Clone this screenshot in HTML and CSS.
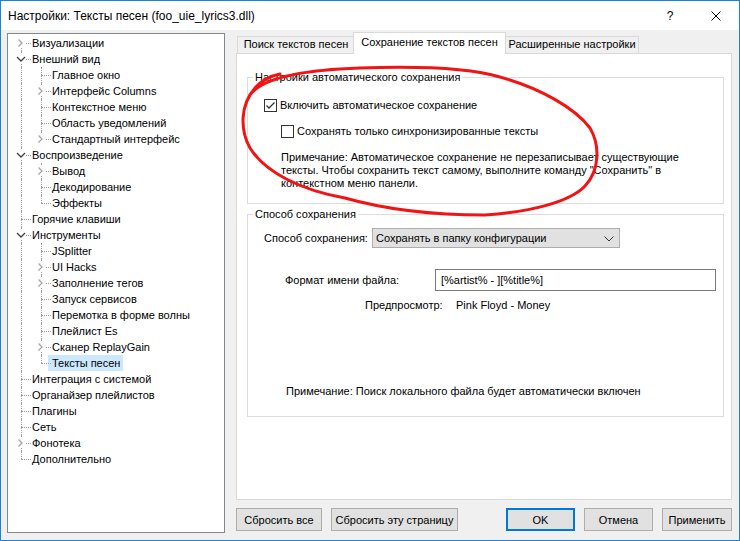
FILE: index.html
```html
<!DOCTYPE html>
<html lang="ru">
<head>
    <meta charset="UTF-8">
    <title>Настройки: Тексты песен</title>
    <link rel="stylesheet" href="styles.css">
</head>
<body>
    <svg class="defs" aria-hidden="true">
        <symbol id="shut" viewBox="0 0 10 10"><path d="M2.5 1.5L6 5L2.5 8.5" fill="none" stroke="#a6a6a6" stroke-width="1.3"/></symbol>
        <symbol id="open" viewBox="0 0 10 10"><path d="M1 3L5 7L9 3" fill="none" stroke="#404040" stroke-width="1.3"/></symbol>
    </svg>

    <div class="window">
        <!-- Title bar -->
        <div class="titlebar">
            <span class="title">Настройки: Тексты песен (foo_uie_lyrics3.dll)</span>
            <span class="cap-btn">?</span>
            <span class="cap-btn">
                <svg width="10" height="10" viewBox="0 0 10 10"><path d="M0.5 0.5L9.5 9.5M9.5 0.5L0.5 9.5" stroke="#000" stroke-width="1"/></svg>
            </span>
        </div>

        <div class="client">
            <!-- Preferences tree -->
            <div class="tree">
                <div class="row"><span class="ln first"><svg class="exp"><use href="#shut"/></svg></span><span class="txt">Визуализации</span></div>
                <div class="row"><span class="ln tee"><svg class="exp"><use href="#open"/></svg></span><span class="txt">Внешний вид</span></div>
                <div class="row"><span class="ln pipe"></span><span class="ln tee"></span><span class="txt">Главное окно</span></div>
                <div class="row"><span class="ln pipe"></span><span class="ln tee"><svg class="exp"><use href="#shut"/></svg></span><span class="txt">Интерфейс Columns</span></div>
                <div class="row"><span class="ln pipe"></span><span class="ln tee"></span><span class="txt">Контекстное меню</span></div>
                <div class="row"><span class="ln pipe"></span><span class="ln tee"></span><span class="txt">Область уведомлений</span></div>
                <div class="row"><span class="ln pipe"></span><span class="ln end"><svg class="exp"><use href="#shut"/></svg></span><span class="txt">Стандартный интерфейс</span></div>
                <div class="row"><span class="ln tee"><svg class="exp"><use href="#open"/></svg></span><span class="txt">Воспроизведение</span></div>
                <div class="row"><span class="ln pipe"></span><span class="ln tee"><svg class="exp"><use href="#shut"/></svg></span><span class="txt">Вывод</span></div>
                <div class="row"><span class="ln pipe"></span><span class="ln tee"></span><span class="txt">Декодирование</span></div>
                <div class="row"><span class="ln pipe"></span><span class="ln end"></span><span class="txt">Эффекты</span></div>
                <div class="row"><span class="ln tee"></span><span class="txt">Горячие клавиши</span></div>
                <div class="row"><span class="ln tee"><svg class="exp"><use href="#open"/></svg></span><span class="txt">Инструменты</span></div>
                <div class="row"><span class="ln pipe"></span><span class="ln tee"></span><span class="txt">JSplitter</span></div>
                <div class="row"><span class="ln pipe"></span><span class="ln tee"><svg class="exp"><use href="#shut"/></svg></span><span class="txt">UI Hacks</span></div>
                <div class="row"><span class="ln pipe"></span><span class="ln tee"><svg class="exp"><use href="#shut"/></svg></span><span class="txt">Заполнение тегов</span></div>
                <div class="row"><span class="ln pipe"></span><span class="ln tee"></span><span class="txt">Запуск сервисов</span></div>
                <div class="row"><span class="ln pipe"></span><span class="ln tee"></span><span class="txt">Перемотка в форме волны</span></div>
                <div class="row"><span class="ln pipe"></span><span class="ln tee"></span><span class="txt">Плейлист Es</span></div>
                <div class="row"><span class="ln pipe"></span><span class="ln tee"><svg class="exp"><use href="#shut"/></svg></span><span class="txt">Сканер ReplayGain</span></div>
                <div class="row"><span class="ln pipe"></span><span class="ln end"></span><span class="txt sel">Тексты песен</span></div>
                <div class="row"><span class="ln tee"></span><span class="txt">Интеграция с системой</span></div>
                <div class="row"><span class="ln tee"></span><span class="txt">Органайзер плейлистов</span></div>
                <div class="row"><span class="ln tee"></span><span class="txt">Плагины</span></div>
                <div class="row"><span class="ln tee"></span><span class="txt">Сеть</span></div>
                <div class="row"><span class="ln tee"><svg class="exp"><use href="#shut"/></svg></span><span class="txt">Фонотека</span></div>
                <div class="row"><span class="ln end"></span><span class="txt">Дополнительно</span></div>
            </div>

            <!-- Page area -->
            <div class="main">
                <div class="tabs">
                    <div class="tab t1">Поиск текстов песен</div>
                    <div class="tab tab-on">Сохранение текстов песен</div>
                    <div class="tab t3">Расширенные настройки</div>
                </div>

                <div class="page">
                    <fieldset class="group g-auto">
                        <legend>Настройки автоматического сохранения</legend>
                        <div class="check lvl1">
                            <span class="box"><svg width="11" height="11" viewBox="0 0 11 11"><path d="M1.5 5.5L4 8L9.5 2.5" fill="none" stroke="#333" stroke-width="1.3"/></svg></span>
                            Включить автоматическое сохранение
                        </div>
                        <div class="check lvl2">
                            <span class="box"></span>
                            Сохранять только синхронизированные тексты
                        </div>
                        <p class="note">Примечание: Автоматическое сохранение не перезаписывает существующие<br>тексты. Чтобы сохранить текст самому, выполните команду "Сохранить" в<br>контекстном меню панели.</p>
                    </fieldset>

                    <fieldset class="group g-save">
                        <legend>Способ сохранения</legend>
                        <div class="field f-method">
                            <span class="label">Способ сохранения:</span>
                            <div class="combo">
                                Сохранять в папку конфигурации
                                <svg class="combo-arrow" width="10" height="6" viewBox="0 0 10 6"><path d="M0.5 0.5L5 5L9.5 0.5" fill="none" stroke="#333" stroke-width="1"/></svg>
                            </div>
                        </div>
                        <div class="field f-format">
                            <span class="label">Формат имени файла:</span>
                            <div class="edit">[%artist% - ][%title%]</div>
                        </div>
                        <div class="field f-preview">
                            <span class="label">Предпросмотр:</span>
                            <span>Pink Floyd - Money</span>
                        </div>
                        <p class="note2">Примечание: Поиск локального файла будет автоматически включен</p>
                    </fieldset>
                </div>

                <div class="buttons">
                    <button class="btn b-reset-all">Сбросить все</button>
                    <button class="btn b-reset-page">Сбросить эту страницу</button>
                    <button class="btn b-ok">OK</button>
                    <button class="btn b-cancel">Отмена</button>
                    <button class="btn b-apply">Применить</button>
                </div>
            </div>
        </div>

        <!-- Red hand-drawn mark over the first group -->
        <svg class="mark" width="740" height="541" viewBox="0 0 740 541">
            <path d="M250 95 C262 78, 300 70, 360 68 C420 66, 470 68, 500 77 C540 88, 575 108, 590 128 C600 145, 600 170, 585 186 C570 202, 530 212, 485 215 C430 215, 380 208, 345 198 C300 190, 265 172, 250 148 C240 130, 240 105, 255 88 C262 80, 270 76, 280 74" fill="none" stroke="#f01414" stroke-width="3" stroke-linecap="round"/>
        </svg>
    </div>
</body>
</html>
```

FILE: styles.css
```css
/* Basic Styling */
body {
    margin: 0;
    font-family: "Liberation Sans", Arial, sans-serif;
    font-size: 11px;
    color: #000;
}
.defs {
    position: absolute;
    width: 0;
    height: 0;
    overflow: hidden;
}
.window {
    position: relative;
    width: 740px;
    height: 541px;
    box-sizing: border-box;
    border: 1px solid #1883d7;
    background-color: #f0f0f0;
    display: flex;
    flex-direction: column;
}
/* Title bar */
.titlebar {
    height: 29px;
    background-color: #fff;
    display: flex;
    align-items: center;
    padding-left: 7px;
    font-size: 12px;
}
.title { flex: 1; }
.cap-btn {
    width: 46px;
    height: 29px;
    display: flex;
    align-items: center;
    justify-content: center;
}
/* Client area */
.client {
    flex: 1;
    display: flex;
    padding: 2px 7px 0 6px;
}
/* Tree */
.tree {
    width: 218px;
    height: 500px;
    box-sizing: border-box;
    margin-top: 1px;
    border: 1px solid #828790;
    background-color: #fff;
    padding: 1px 0 0 3px;
}
.row {
    display: flex;
    height: 16px;
    line-height: 16px;
    white-space: nowrap;
}
.ln {
    position: relative;
    flex: none;
    width: 20px;
    height: 16px;
}
.ln::before, .ln::after { content: ""; position: absolute; }
.pipe::before, .tee::before { left: 10px; top: 0; height: 16px; border-left: 1px dotted #a0a0a0; }
.end::before { left: 10px; top: 0; height: 8px; border-left: 1px dotted #a0a0a0; }
.first::before { left: 10px; top: 8px; height: 8px; border-left: 1px dotted #a0a0a0; }
.tee::after, .end::after, .first::after { left: 10px; top: 8px; width: 10px; border-top: 1px dotted #a0a0a0; }
.exp {
    position: absolute;
    left: 5px;
    top: 3px;
    width: 10px;
    height: 10px;
    background-color: #fff;
    z-index: 1;
}
.txt { padding-left: 1px; }
.sel {
    background-color: #cce8ff;
    margin-left: -3px;
    padding: 0 3px 0 4px;
}
/* Right column */
.main {
    width: 496px;
    margin-left: 11px;
}
.tabs {
    display: flex;
    align-items: flex-end;
    height: 21px;
    padding-left: 1px;
}
.tab {
    height: 17px;
    box-sizing: border-box;
    border: 1px solid #d9d9d9;
    border-bottom: none;
    background-color: #f0f0f0;
    line-height: 15px;
    text-align: center;
    white-space: nowrap;
}
.t1 { width: 118px; }
.t3 { width: 134px; }
.tab-on {
    position: relative;
    z-index: 2;
    width: 153px;
    height: 22px;
    margin: 0 -1px -1px -2px;
    padding-top: 2px;
    background-color: #fff;
}
.page {
    height: 447px;
    box-sizing: border-box;
    border: 1px solid #d9d9d9;
    background-color: #fff;
    padding: 16px 7px 0 10px;
}
/* Group boxes */
.group {
    margin: 0;
    padding: 0 0 13px;
    border: 1px solid #dcdcdc;
    min-width: 0;
}
.group legend {
    margin-left: 5px;
    padding: 0 2px;
    line-height: 14px;
}
.g-save {
    margin-top: 3px;
    padding-bottom: 17px;
}
.check {
    display: flex;
    align-items: center;
    height: 16px;
}
.lvl1 { margin-top: 13px; padding-left: 16px; }
.lvl2 { margin-top: 10px; padding-left: 33px; }
.box {
    width: 13px;
    height: 13px;
    box-sizing: border-box;
    border: 1px solid #333;
    background-color: #fff;
    margin-right: 3px;
    display: flex;
    align-items: center;
    justify-content: center;
}
.note {
    margin: 12px 0 0;
    padding-left: 33px;
    line-height: 13px;
}
.field {
    display: flex;
    align-items: center;
}
.f-method { margin-top: 7px; padding-left: 16px; }
.f-method .label { width: 108px; }
.f-format { margin-top: 21px; padding-left: 37px; }
.f-format .label { width: 150px; }
.f-preview { margin-top: 6px; padding-left: 117px; height: 16px; }
.f-preview .label { width: 91px; }
.combo {
    position: relative;
    width: 248px;
    height: 20px;
    box-sizing: border-box;
    border: 1px solid #adadad;
    background-color: #e1e1e1;
    line-height: 18px;
    padding-left: 3px;
}
.combo-arrow {
    position: absolute;
    right: 5px;
    top: 7px;
}
.edit {
    width: 281px;
    height: 22px;
    box-sizing: border-box;
    border: 1px solid #7a7a7a;
    line-height: 20px;
    padding-left: 5px;
}
.note2 {
    margin: 70px 0 0;
    padding-left: 38px;
    line-height: 16px;
}
/* Dialog buttons */
.buttons {
    display: flex;
    margin-top: 8px;
}
.btn {
    height: 23px;
    box-sizing: border-box;
    border: 1px solid #adadad;
    background-color: #e1e1e1;
    font-family: inherit;
    font-size: 11px;
    color: #000;
    padding: 0;
    margin-left: 9px;
}
.b-reset-all { width: 86px; margin-left: 0; }
.b-reset-page { width: 127px; }
.b-ok { width: 69px; margin-left: auto; border: 2px solid #0078d7; }
.b-cancel { width: 69px; }
.b-apply { width: 70px; }
/* Annotation */
.mark {
    position: absolute;
    left: -1px;
    top: -1px;
    pointer-events: none;
}
```
